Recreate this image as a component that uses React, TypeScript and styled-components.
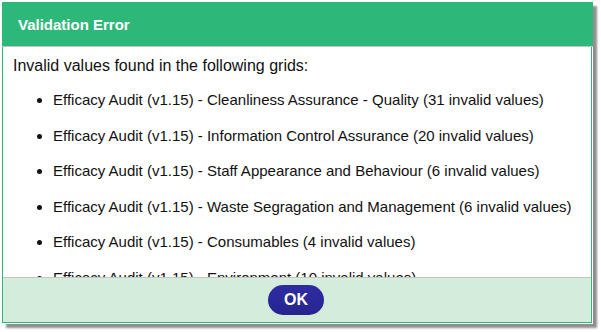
import React from "react";
import styled, { createGlobalStyle } from "styled-components";

const Global = createGlobalStyle`
  html, body { margin: 0; padding: 0; background: #ffffff; }
  body { font-family: "Liberation Sans", Arial, sans-serif; }
`;

const Page = styled.div`
  padding: 2px 0 0 2px;
  width: 601px;
  height: 332px;
  box-sizing: border-box;
  overflow: hidden;
`;

const Dialog = styled.div`
  width: 591px;
  height: 322px;
  background: #ffffff;
  box-shadow: 4px 4px 2px #8f8f8f;
  display: flex;
  flex-direction: column;
`;

const Header = styled.div`
  height: 44px;
  flex: none;
  background: #2db87a;
  color: #ffffff;
  font-weight: bold;
  font-size: 15px;
  display: flex;
  align-items: center;
  padding-left: 16px;
  border-bottom: 1px solid #c4c4c4;
`;

const Frame = styled.div`
  flex: 1;
  display: flex;
  flex-direction: column;
  margin: 0 1px 1px 0;
  border: 1px solid #2db87a;
  border-top: none;
  min-height: 0;
`;

const Body = styled.div`
  flex: 1;
  overflow: hidden;
  padding: 9px 10px 0 10px;
  color: #111111;
  font-size: 15px;
  line-height: 20px;
  min-height: 0;
`;

const Intro = styled.div`
  font-size: 16px;
`;

const List = styled.ul`
  margin: 14px 0 0 0;
  padding-left: 40px;
`;

const Item = styled.li`
  margin-bottom: 15.5px;
`;

const Footer = styled.div`
  height: 44px;
  flex: none;
  background: #d4ecdb;
  border-top: 1px solid #c4c4c4;
  display: flex;
  align-items: center;
  justify-content: center;
`;

const OkButton = styled.button`
  width: 56px;
  height: 30px;
  margin-left: -2px;
  border: none;
  border-radius: 15px;
  background: linear-gradient(#2f2ca3, #27248f);
  color: #ffffff;
  font-family: "Liberation Sans", Arial, sans-serif;
  font-weight: bold;
  font-size: 16px;
  padding: 0;
  cursor: pointer;
`;

const items = [
  "Efficacy Audit (v1.15) - Cleanliness Assurance - Quality (31 invalid values)",
  "Efficacy Audit (v1.15) - Information Control Assurance (20 invalid values)",
  "Efficacy Audit (v1.15) - Staff Appearance and Behaviour (6 invalid values)",
  "Efficacy Audit (v1.15) - Waste Segragation and Management (6 invalid values)",
  "Efficacy Audit (v1.15) - Consumables (4 invalid values)",
  "Efficacy Audit (v1.15) - Environment (10 invalid values)",
];

export default function App() {
  return (
    <>
      <Global />
      <Page>
        <Dialog>
          <Header>Validation Error</Header>
          <Frame>
            <Body>
              <Intro>Invalid values found in the following grids:</Intro>
              <List>
                {items.map((t) => (
                  <Item key={t}>{t}</Item>
                ))}
              </List>
            </Body>
            <Footer>
              <OkButton>OK</OkButton>
            </Footer>
          </Frame>
        </Dialog>
      </Page>
    </>
  );
}
